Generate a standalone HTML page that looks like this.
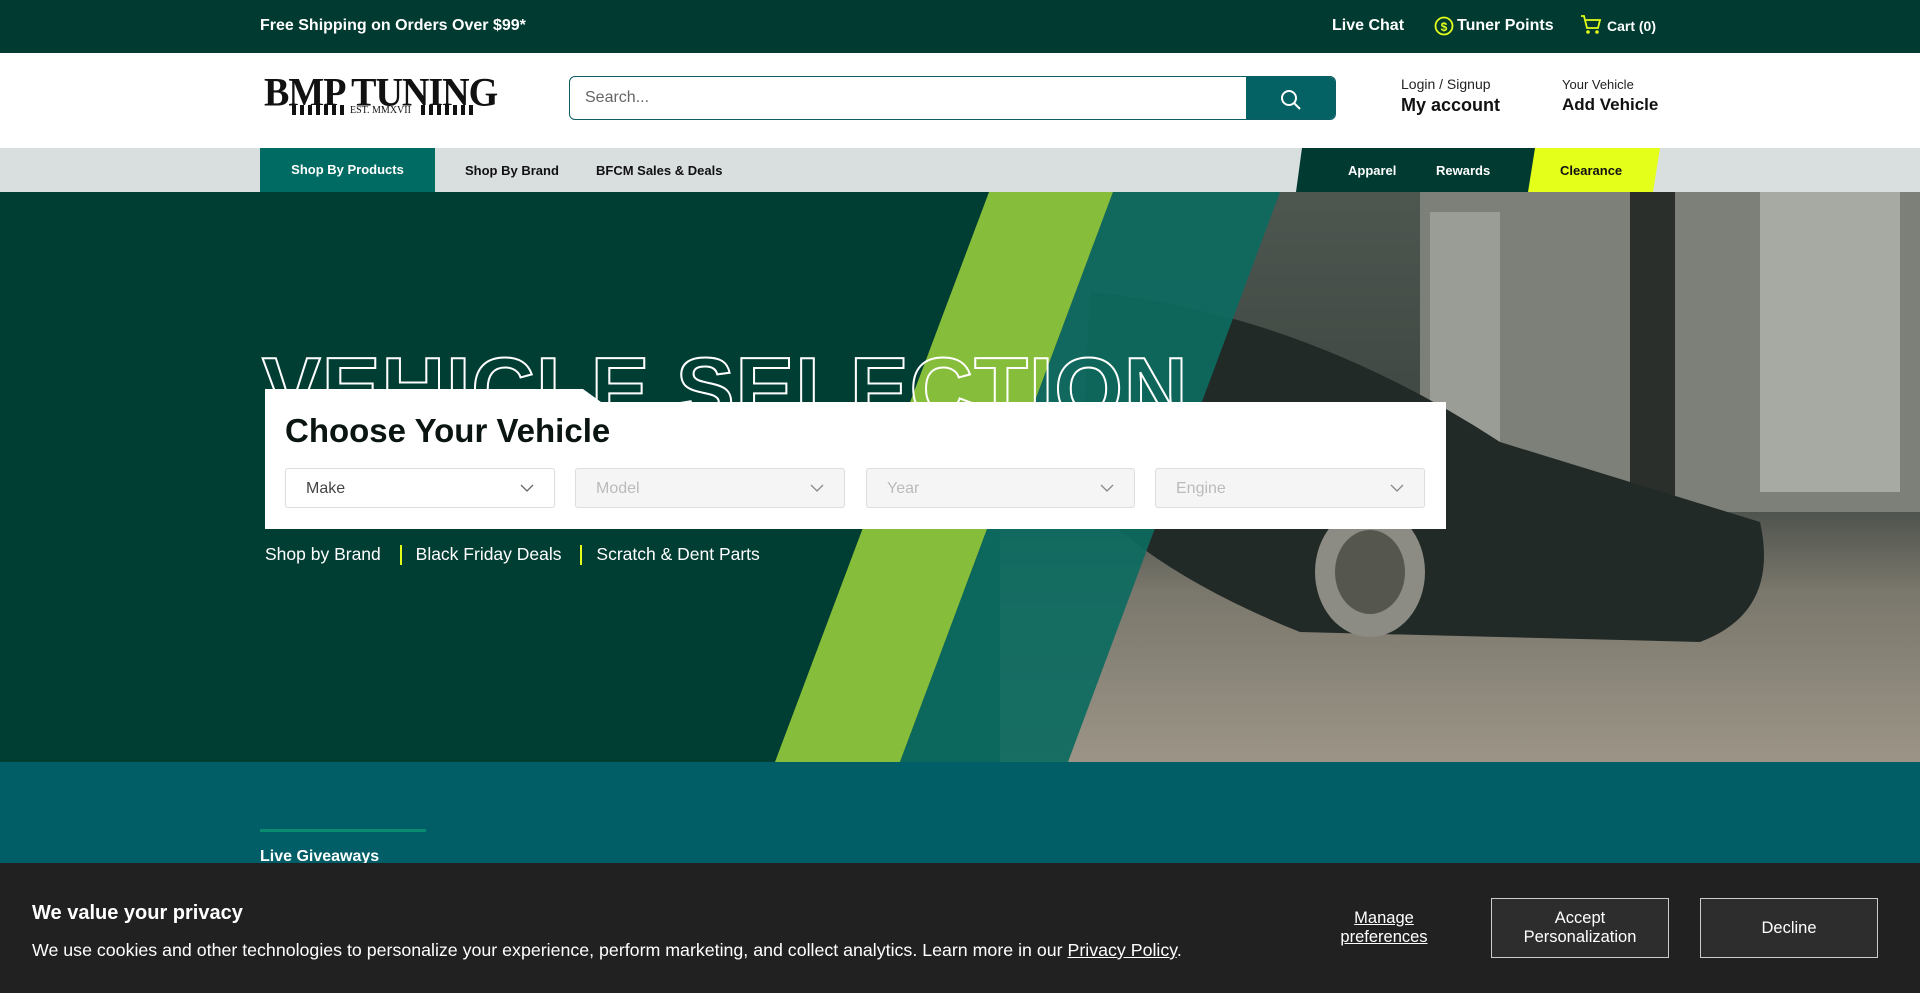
<!DOCTYPE html>
<html><head><meta charset="utf-8"><style>
*{margin:0;padding:0;box-sizing:border-box}
body{width:1920px;height:993px;overflow:hidden;font-family:"Liberation Sans",sans-serif;position:relative;background:#fff}
.abs{position:absolute}
.top{left:0;top:0;width:1920px;height:53px;background:#003a30;color:#fff;font-weight:bold;font-size:16px}
.hdr{left:0;top:53px;width:1920px;height:95px;background:#fff}
.nav{left:0;top:148px;width:1920px;height:44px;background:#d9dedf;font-weight:bold;font-size:13px}
.hero{left:0;top:192px;width:1920px;height:570px;background:#003d33;overflow:hidden}
.sel{height:40px;border:1px solid #ddd;border-radius:3px;background:#f5f5f5;color:#bbb;font-size:16px;padding:11px 20px;top:468px}
.sel svg{position:absolute;right:20px;top:14px}
</style></head><body>
<div class="abs top">
 <div class="abs" style="left:260px;top:17px">Free Shipping on Orders Over $99*</div>
 <div class="abs" style="left:1332px;top:17px;font-weight:bold">Live Chat</div>
 <svg class="abs" style="left:1434px;top:16px" width="20" height="20"><circle cx="10" cy="10" r="8.5" fill="none" stroke="#e4ff1a" stroke-width="1.8"/><text x="10" y="15" font-size="12" fill="#e4ff1a" text-anchor="middle" font-family="Liberation Sans">$</text></svg>
 <div class="abs" style="left:1457px;top:17px;font-weight:bold">Tuner Points</div>
 <svg class="abs" style="left:1580px;top:14px" width="22" height="22"><path d="M1 2h3l3 12h11l2-8H6" fill="none" stroke="#e4ff1a" stroke-width="1.8"/><circle cx="8" cy="18" r="1.8" fill="#e4ff1a"/><circle cx="17" cy="18" r="1.8" fill="#e4ff1a"/></svg>
 <div class="abs" style="left:1607px;top:18px;font-size:14px">Cart (0)</div>
</div>
<div class="abs hdr">
 <div class="abs" style="left:264px;top:20px;font-family:'Liberation Serif',serif;font-weight:bold;font-size:38px;letter-spacing:-1px;color:#111;line-height:40px;transform:scaleY(1.05)">BMP TUNING</div>
 <div class="abs" style="left:292px;top:52px;width:52px;height:10px;background:repeating-linear-gradient(90deg,#111 0 4px,#fff 4px 8px)"></div>
 <div class="abs" style="left:421px;top:52px;width:52px;height:10px;background:repeating-linear-gradient(90deg,#111 0 4px,#fff 4px 8px)"></div>
 <div class="abs" style="left:350px;top:52px;font-family:'Liberation Serif',serif;font-size:10px;color:#111">EST. MMXVII</div>
 <div class="abs" style="left:569px;top:23px;width:767px;height:44px;border:1px solid #0b5e63;border-radius:6px;overflow:hidden">
  <div class="abs" style="left:15px;top:12px;color:#666;font-size:16px">Search...</div>
  <div class="abs" style="right:0;top:0;width:89px;height:44px;background:#046164"><svg class="abs" style="left:34px;top:12px" width="22" height="22"><circle cx="9" cy="9" r="7" fill="none" stroke="#fff" stroke-width="2"/><path d="M14 14l6 6" stroke="#fff" stroke-width="2"/></svg></div>
 </div>
 <div class="abs" style="left:1401px;top:23px;font-size:14px;color:#222">Login / Signup</div>
 <div class="abs" style="left:1401px;top:42px;font-size:18px;font-weight:bold;color:#111">My account</div>
 <div class="abs" style="left:1562px;top:24px;font-size:13px;color:#222">Your Vehicle</div>
 <div class="abs" style="left:1562px;top:42px;font-size:17px;font-weight:bold;color:#111">Add Vehicle</div>
</div>
<div class="abs nav">
 <div class="abs" style="left:260px;top:0;width:175px;height:44px;background:#006b63;color:#fff;text-align:center;line-height:44px">Shop By Products</div>
 <div class="abs" style="left:465px;top:15px;color:#111">Shop By Brand</div>
 <div class="abs" style="left:596px;top:15px;color:#111">BFCM Sales &amp; Deals</div>
 <svg class="abs" style="left:1296px;top:0" width="366" height="44"><polygon points="6,0 240,0 236,44 0,44" fill="#003a30"/><polygon points="239,0 364,0 357,44 232,44" fill="#e4ff1a"/></svg>
 <div class="abs" style="left:1348px;top:15px;color:#fff">Apparel</div>
 <div class="abs" style="left:1436px;top:15px;color:#fff">Rewards</div>
 <div class="abs" style="left:1560px;top:15px;color:#111">Clearance</div>
</div>
<div class="abs hero">
 <svg class="abs" style="left:0;top:0" width="1920" height="570">
  <defs><linearGradient id="g" x1="0" y1="0" x2="0" y2="1"><stop offset="0" stop-color="#4e5650"/><stop offset=".5" stop-color="#3c4440"/><stop offset=".7" stop-color="#7a776c"/><stop offset="1" stop-color="#9c9587"/></linearGradient></defs>
  <rect x="1000" y="0" width="920" height="570" fill="url(#g)"/>
  <rect x="1420" y="0" width="500" height="320" fill="#7d8079"/>
  <rect x="1430" y="20" width="70" height="250" fill="#9a9c96"/>
  <rect x="1760" y="0" width="140" height="300" fill="#a7a9a3"/>
  <rect x="1630" y="0" width="45" height="360" fill="#2a2f2b"/>
  <path d="M1090 100 Q1300 120 1500 250 L1760 330 Q1780 420 1700 450 L1300 440 Q1150 380 1080 300Z" fill="#222a27"/>
  <ellipse cx="1370" cy="380" rx="55" ry="65" fill="#8d8c84"/><ellipse cx="1370" cy="380" rx="35" ry="42" fill="#55574f"/>
  <polygon points="989,0 1113,0 900,570 775,570" fill="#86bd3a"/>
  <polygon points="1113,0 1280,0 1068,570 900,570" fill="#0d6a60" opacity=".93"/>
 </svg>
 <div class="abs" style="left:262px;top:146px;font-size:88px;font-weight:bold;color:transparent;-webkit-text-stroke:2px #fff;letter-spacing:1px;white-space:nowrap">VEHICLE SELECTION</div>
 <svg class="abs" style="left:265px;top:197px" width="1181" height="140"><polygon points="0,0 318,0 336,13 1181,13 1181,140 0,140" fill="#fff"/></svg>
 <div class="abs" style="left:285px;top:220px;font-size:33px;font-weight:bold;color:#0a1512">Choose Your Vehicle</div>
 <div class="abs sel" style="left:285px;width:270px;top:276px;background:#fff;color:#444"><span>Make</span><svg width="14" height="10"><path d="M1 2l6 6 6-6" fill="none" stroke="#666" stroke-width="1.3"/></svg></div>
 <div class="abs sel" style="left:575px;width:270px;top:276px"><span>Model</span><svg width="14" height="10"><path d="M1 2l6 6 6-6" fill="none" stroke="#888" stroke-width="1.3"/></svg></div>
 <div class="abs sel" style="left:866px;width:269px;top:276px"><span>Year</span><svg width="14" height="10"><path d="M1 2l6 6 6-6" fill="none" stroke="#888" stroke-width="1.3"/></svg></div>
 <div class="abs sel" style="left:1155px;width:270px;top:276px"><span>Engine</span><svg width="14" height="10"><path d="M1 2l6 6 6-6" fill="none" stroke="#888" stroke-width="1.3"/></svg></div>
 <div class="abs" style="left:265px;top:352px;color:#fff;font-size:17.5px;white-space:nowrap">Shop by Brand <span style="display:inline-block;width:2px;height:20px;background:#e4ff1a;vertical-align:middle;margin:0 14px"></span>Black Friday Deals <span style="display:inline-block;width:2px;height:20px;background:#e4ff1a;vertical-align:middle;margin:0 14px"></span>Scratch &amp; Dent Parts</div>
</div>
<div class="abs" style="left:0;top:762px;width:1920px;height:101px;background:#015e66">
 <div class="abs" style="left:260px;top:67px;width:166px;height:3px;background:#0a8a6e"></div>
 <div class="abs" style="left:260px;top:86px;color:#fff;font-weight:bold;font-size:16px">Live Giveaways</div>
</div>
<div class="abs" style="left:0;top:863px;width:1920px;height:130px;background:#212121;color:#fff">
 <div class="abs" style="left:32px;top:39px;font-size:20px;font-weight:bold">We value your privacy</div>
 <div class="abs" style="left:32px;top:77px;font-size:17.8px;white-space:nowrap">We use cookies and other technologies to personalize your experience, perform marketing, and collect analytics. Learn more in our <u>Privacy Policy</u>.</div>
 <div class="abs" style="left:1336px;top:46px;width:96px;text-align:center;font-size:16.5px;text-decoration:underline;line-height:19px">Manage preferences</div>
 <div class="abs" style="left:1491px;top:35px;width:178px;height:60px;border:1px solid #ccc;background:#2d2d2d;text-align:center;font-size:16.5px;line-height:19px;padding-top:10px">Accept<br>Personalization</div>
 <div class="abs" style="left:1700px;top:35px;width:178px;height:60px;border:1px solid #ccc;background:#2d2d2d;text-align:center;font-size:16.5px;line-height:58px">Decline</div>
</div>
</body></html>
